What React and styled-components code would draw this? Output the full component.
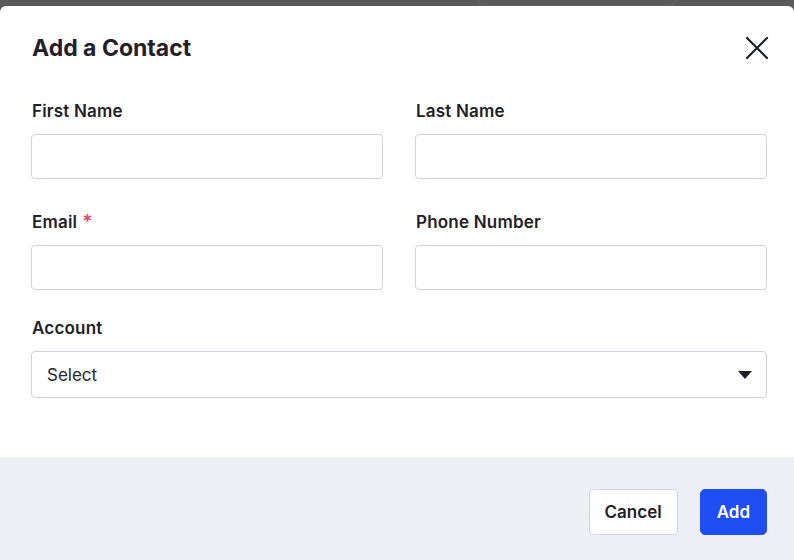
import React, { useState } from 'react';
import styled, { createGlobalStyle } from 'styled-components';

const Global = createGlobalStyle`
  html, body { margin: 0; padding: 0; }
  body {
    font-family: Inter, "Noto Sans", "Liberation Sans", sans-serif;
    color: #1f2029;
  }
  * { box-sizing: border-box; }
`;

const Backdrop = styled.div`
  position: relative;
  width: 794px;
  height: 560px;
  background: #5a5a5a;
  padding-top: 6px;
  display: flex;
  flex-direction: column;
  overflow: hidden;
`;

const Ghost = styled.div`
  position: absolute;
  top: -30px;
  left: 476px;
  width: 204px;
  height: 36px;
  border: 1.5px solid #666;
  border-radius: 12px;
`;

const Modal = styled.div`
  position: relative;
  flex: 1;
  background: #fff;
  border-radius: 6px 6px 0 0;
  display: flex;
  flex-direction: column;
`;

const Body = styled.div`
  flex: 1;
  padding: 27px 27px 0 31px;
`;

const Header = styled.div`
  display: flex;
  align-items: center;
  justify-content: space-between;
  margin-bottom: 38px;
`;

const Title = styled.h2`
  margin: 0 0 0 1px;
  font-size: 23px;
  line-height: 30px;
  font-weight: 700;
  letter-spacing: 0;
`;

const CloseButton = styled.button`
  border: 0;
  background: none;
  padding: 0;
  width: 26px;
  height: 26px;
  display: flex;
  align-items: center;
  justify-content: center;
  cursor: pointer;
  margin-right: -3px;
  margin-top: -1px;
`;

const Grid = styled.div`
  display: grid;
  grid-template-columns: 1fr 1fr;
  column-gap: 32px;
  row-gap: 28px;
`;

const Field = styled.div`
  display: flex;
  flex-direction: column;
  grid-column: ${p => (p.$wide ? '1 / -1' : 'auto')};
  margin-bottom: ${p => (p.$extra ? '5px' : '0')};
`;

const Label = styled.label`
  font-size: 17px;
  line-height: 20px;
  font-weight: 600;
  margin: 0 0 13px 1px;
  letter-spacing: 0.2px;
`;

const Required = styled.span`
  color: #e0466c;
  margin-left: 5px;
  font-size: 19px;
`;

const Input = styled.input`
  height: 45px;
  border: 1px solid #d2d3e0;
  border-radius: 4px;
  padding: 0 14px;
  font: inherit;
  font-size: 16px;
  outline: none;
`;

const SelectBox = styled.div`
  height: 47px;
  border: 1px solid #d2d3e0;
  border-radius: 4px;
  padding: 0 14px 0 15px;
  display: flex;
  align-items: center;
  justify-content: space-between;
  font-size: 17px;
  color: #26272e;
`;

const Footer = styled.div`
  height: 103px;
  background: #eeeff4;
  display: flex;
  justify-content: flex-end;
  align-items: flex-start;
  gap: 22px;
  padding: 32px 27px 0 0;
`;

const Button = styled.button`
  height: 46px;
  padding: 0 ${p => (p.$primary ? '16px' : '15px')};
  border-radius: 5px;
  font: inherit;
  font-size: 17px;
  font-weight: 600;
  cursor: pointer;
  border: 1px solid ${p => (p.$primary ? '#1f4ef5' : '#d2d3e0')};
  background: ${p => (p.$primary ? '#1f4ef5' : '#fff')};
  color: ${p => (p.$primary ? '#fff' : '#1f2029')};
`;

export default function App() {
  const [form, setForm] = useState({ first: '', last: '', email: '', phone: '' });
  const set = k => e => setForm({ ...form, [k]: e.target.value });

  return (
    <>
      <Global />
      <Backdrop>
        <Ghost />
        <Modal>
          <Body>
            <Header>
              <Title>Add a Contact</Title>
              <CloseButton aria-label="Close">
                <svg width="24" height="24" viewBox="0 0 24 24" fill="none" stroke="#1f2029" strokeWidth="2.2" strokeLinecap="round">
                  <path d="M2 2L22 22M22 2L2 22" />
                </svg>
              </CloseButton>
            </Header>
            <Grid>
              <Field $extra>
                <Label>First Name</Label>
                <Input value={form.first} onChange={set('first')} />
              </Field>
              <Field $extra>
                <Label>Last Name</Label>
                <Input value={form.last} onChange={set('last')} />
              </Field>
              <Field>
                <Label>Email<Required>*</Required></Label>
                <Input value={form.email} onChange={set('email')} />
              </Field>
              <Field>
                <Label>Phone Number</Label>
                <Input value={form.phone} onChange={set('phone')} />
              </Field>
              <Field $wide>
                <Label>Account</Label>
                <SelectBox>
                  <span>Select</span>
                  <svg width="14" height="8" viewBox="0 0 14 8">
                    <path d="M0 0H14L7 8Z" fill="#1f2029" />
                  </svg>
                </SelectBox>
              </Field>
            </Grid>
          </Body>
          <Footer>
            <Button>Cancel</Button>
            <Button $primary>Add</Button>
          </Footer>
        </Modal>
      </Backdrop>
    </>
  );
}
